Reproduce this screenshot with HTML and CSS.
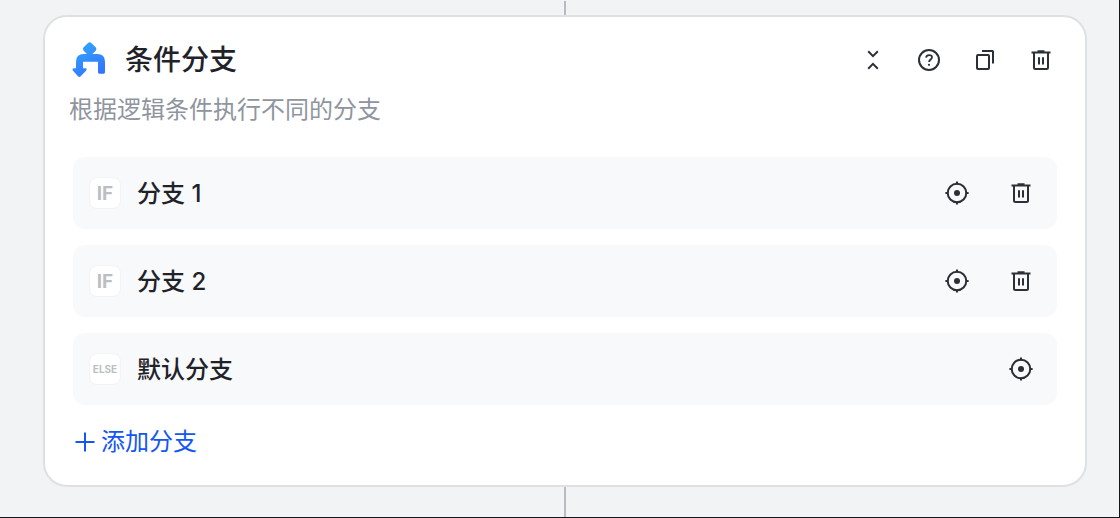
FILE: index.html
```html
<!DOCTYPE html>
<html lang="zh-CN">
<head>
<meta charset="utf-8">
<title>条件分支</title>
<link rel="stylesheet" href="styles.css">
</head>
<body>
<svg class="sprite" aria-hidden="true">
  <symbol id="trash" viewBox="0 0 24 24"><path d="M8.5 3.200h7M2.500 4.600h19" stroke-width="2"/><path d="M5 5v14.500a1.500 1.500 0 0 0 1.500 1.500h11a1.500 1.500 0 0 0 1.500-1.500V5M10 9.300v7.200M14 9.300v7.200" stroke-width="2"/></symbol>
  <symbol id="target" viewBox="0 0 24 24"><circle cx="12" cy="12" r="9.300"/><path d="M12 .4v3M12 20.600v3M.4 12h3M20.600 12h3"/><circle class="solid" cx="12" cy="12" r="3"/></symbol>
</svg>
<main class="canvas">
  <div class="connector connector-in"></div>
  <section class="card">
    <header class="header">
      <svg class="logo" viewBox="108 126 102 108" aria-hidden="true">
        <defs><linearGradient id="blue" gradientUnits="userSpaceOnUse" x1="140" y1="126" x2="195" y2="228"><stop offset="0" stop-color="#32a5ff"/><stop offset="1" stop-color="#3370ff"/></linearGradient></defs>
        <path fill="url(#blue)" d="M156 129q5-4 10 0l13 13q4 5 0 10l-10 10h15q23 0 23 23v32q0 4-4 4h-13q-4 0-4-4v-32h-45v20h7q7 1 2 7l-16 17q-4 4-8 0l-15-17q-4-7 3-7h6v-20q0-23 23-23h10l-10-10q-4-5 0-10z"/>
      </svg>
      <h1 class="title">条件分支</h1>
      <div class="tools">
        <button class="icon-button" type="button" aria-label="收起"><svg class="icon" viewBox="0 0 24 24"><path d="m7.200 3.300 4.800 4.800 4.800-4.800M7.200 20.700l4.800-4.800 4.800 4.800"/></svg></button>
        <button class="icon-button" type="button" aria-label="帮助"><svg class="icon" viewBox="0 0 24 24"><circle cx="12" cy="12" r="10"/><path d="M9.100 9.600C9.200 6.300 15 6.300 15 9.300c0 2.300-2.900 2.200-2.900 4.700" stroke-width="1.800"/><circle class="solid" cx="12" cy="16.800" r="1.100"/></svg></button>
        <button class="icon-button" type="button" aria-label="复制"><svg class="icon" viewBox="0 0 24 24"><rect x="4" y="7" width="12" height="14" rx="1"/><path d="M9 3h10.500a.5.5 0 0 1 .5.5V15.500"/></svg></button>
        <button class="icon-button" type="button" aria-label="删除"><svg class="icon"><use href="#trash"/></svg></button>
      </div>
    </header>
    <p class="description">根据逻辑条件执行不同的分支</p>
    <ul class="branches">
      <li class="branch">
        <span class="badge">IF</span><span class="name">分支 1</span>
        <button class="icon-button" type="button" aria-label="定位分支 1"><svg class="icon"><use href="#target"/></svg></button>
        <button class="icon-button" type="button" aria-label="删除分支 1"><svg class="icon"><use href="#trash"/></svg></button>
      </li>
      <li class="branch">
        <span class="badge">IF</span><span class="name">分支 2</span>
        <button class="icon-button" type="button" aria-label="定位分支 2"><svg class="icon"><use href="#target"/></svg></button>
        <button class="icon-button" type="button" aria-label="删除分支 2"><svg class="icon"><use href="#trash"/></svg></button>
      </li>
      <li class="branch">
        <span class="badge badge-small">ELSE</span><span class="name">默认分支</span>
        <button class="icon-button" type="button" aria-label="定位默认分支"><svg class="icon"><use href="#target"/></svg></button>
      </li>
    </ul>
    <button class="add" type="button"><svg class="icon" viewBox="0 0 24 24"><path d="M12 2.500v19M2.500 12h19"/></svg>添加分支</button>
  </section>
  <div class="connector connector-out"></div>
</main>
</body>
</html>
```
FILE: styles.css
```css
* {
  box-sizing: border-box;
}

body {
  margin: 0;
  color: #1f2329;
  font-family: Inter, "Noto Sans CJK SC", sans-serif;
}

.canvas {
  display: flex;
  flex-direction: column;
  min-height: 100vh;
  padding: 1px 32px 0 43px;
  border-right: 1px solid #15171a;
  border-bottom: 1px solid #15171a;
  background: #f1f3f5;
}

.sprite {
  display: none;
}

.connector {
  width: 2px;
  align-self: center;
  background: #b8bbc1;
}

.connector-in {
  height: 14px;
}

.connector-out {
  flex: 1;
  min-height: 30px;
}

.card {
  padding: 23px 28px 27px;
  border: 2px solid #dee0e3;
  border-radius: 24px;
  background: #fff;
}

.header {
  display: flex;
  align-items: center;
  height: 40px;
  margin-left: -1px;
  padding-right: 4px;
}

.logo {
  width: 34px;
  height: 36px;
}

.title {
  flex: 1;
  margin: 0 0 0 19px;
  font-size: 28px;
  font-weight: 500;
  line-height: 40px;
}

.tools {
  display: flex;
  gap: 32px;
}

.icon-button {
  display: flex;
  padding: 0;
  border: 0;
  background: none;
  color: #2b2f36;
  cursor: pointer;
}

.icon {
  width: 24px;
  height: 24px;
  fill: none;
  stroke: currentColor;
  stroke-width: 2;
}

.solid {
  fill: currentColor;
  stroke: none;
}

.description {
  margin: 14px -4px 31px;
  color: #8f959e;
  font-size: 24px;
  line-height: 32px;
}

.branches {
  display: flex;
  flex-direction: column;
  gap: 16px;
  margin: 0;
  padding: 0;
  list-style: none;
}

.branch {
  display: flex;
  align-items: center;
  gap: 40px;
  height: 72px;
  padding: 0 24px 0 16px;
  border-radius: 12px;
  background: #f8f9fb;
}

.badge {
  display: flex;
  align-items: center;
  justify-content: center;
  width: 32px;
  height: 32px;
  margin-right: -24px;
  border: 1px solid #f2f3f5;
  border-radius: 8px;
  background: #fff;
  color: #bbbfc4;
  font-size: 19px;
  font-weight: 700;
}

.badge-small {
  font-size: 10px;
}

.name {
  flex: 1;
  padding-top: 2px;
  font-size: 24px;
  font-weight: 500;
  line-height: 32px;
}

.add {
  display: flex;
  align-items: center;
  gap: 4px;
  margin-top: 21px;
  padding: 0;
  border: 0;
  background: none;
  color: #1456f0;
  font: inherit;
  font-size: 24px;
  line-height: 32px;
  cursor: pointer;
}
```
